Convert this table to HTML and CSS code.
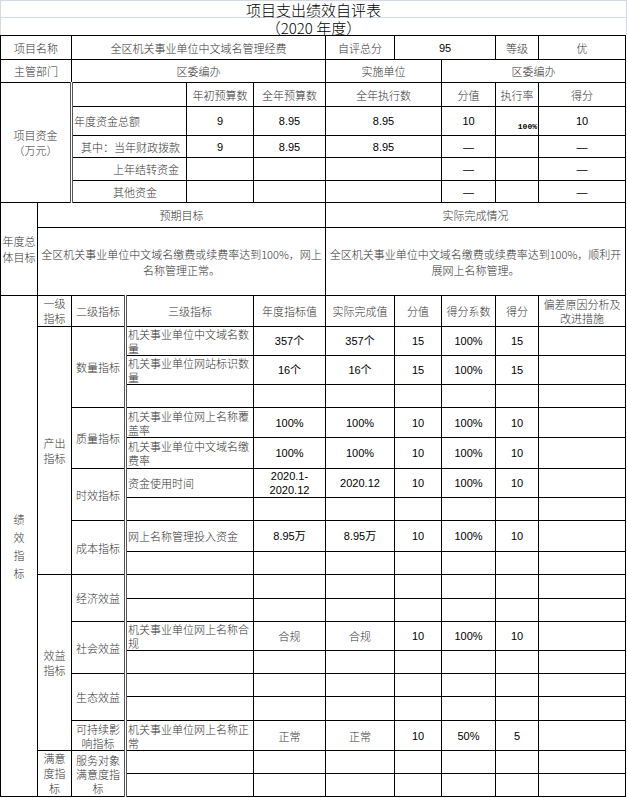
FILE: index.html
```html
<!DOCTYPE html>
<html lang="zh-CN">
<head>
<meta charset="utf-8">
<title>项目支出绩效自评表</title>
<link rel="stylesheet" href="styles.css">
</head>
<body>
<div class="sheet">
  <div class="title">项目支出绩效自评表</div>
  <div class="subtitle">（2020 年度）</div>
  <table class="grid">
    <colgroup>
      <col class="w37"><col class="w34"><col class="w54"><col class="w61"><col class="w67"><col class="w72"><col class="w69"><col class="w47"><col class="w54"><col class="w43"><col class="w87">
    </colgroup>
    <tr class="h24">
      <td colspan="2">项目名称</td>
      <td colspan="4">全区机关事业单位中文域名管理经费</td>
      <td>自评总分</td>
      <td colspan="2" class="num">95</td>
      <td>等级</td>
      <td>优</td>
    </tr>
    <tr class="h23">
      <td colspan="2">主管部门</td>
      <td colspan="4">区委编办</td>
      <td colspan="2">实施单位</td>
      <td colspan="3">区委编办</td>
    </tr>
    <tr class="h24">
      <td colspan="2" rowspan="5" class="fund dblr">项目资金<br>（万元）</td>
      <td colspan="2"></td>
      <td>年初预算数</td>
      <td>全年预算数</td>
      <td colspan="2">全年执行数</td>
      <td>分值</td>
      <td>执行率</td>
      <td>得分</td>
    </tr>
    <tr class="h25">
      <td colspan="2" class="left i1">年度资金总额</td>
      <td class="num">9</td>
      <td class="num">8.95</td>
      <td colspan="2" class="num">8.95</td>
      <td class="num">10</td>
      <td class="tiny">100%</td>
      <td class="num">10</td>
    </tr>
    <tr class="h22">
      <td colspan="2" class="left i8">其中：当年财政拨款</td>
      <td class="num">9</td>
      <td class="num">8.95</td>
      <td colspan="2" class="num">8.95</td>
      <td class="num">—</td>
      <td></td>
      <td class="num">—</td>
    </tr>
    <tr class="h23">
      <td colspan="2" class="left i40">上年结转资金</td>
      <td></td>
      <td></td>
      <td colspan="2"></td>
      <td class="num">—</td>
      <td></td>
      <td class="num">—</td>
    </tr>
    <tr class="h22">
      <td colspan="2" class="left i40">其他资金</td>
      <td></td>
      <td></td>
      <td colspan="2"></td>
      <td class="num">—</td>
      <td></td>
      <td class="num">—</td>
    </tr>
    <tr class="h25">
      <td rowspan="2" class="tight goalhead">年度总<br>体目标</td>
      <td colspan="5">预期目标</td>
      <td colspan="5">实际完成情况</td>
    </tr>
    <tr class="h68">
      <td colspan="5" class="goal">全区机关事业单位中文域名缴费或续费率达到100%，网上<br>名称管理正常。</td>
      <td colspan="5" class="goal">全区机关事业单位中文域名缴费或续费率达到100%，顺利开<br>展网上名称管理。</td>
    </tr>
    <tr class="h31">
      <td rowspan="19" class="vert"><span class="stack">绩<br>效<br>指<br>标</span></td>
      <td class="tight">一级<br>指标</td>
      <td class="dbl">二级指标</td>
      <td colspan="2">三级指标</td>
      <td>年度指标值</td>
      <td>实际完成值</td>
      <td>分值</td>
      <td>得分系数</td>
      <td>得分</td>
      <td class="multi">偏差原因分析及<br>改进措施</td>
    </tr>
    <tr class="h28">
      <td rowspan="9" class="tight">产出<br>指标</td>
      <td rowspan="3" class="dbl">数量指标</td>
      <td colspan="2" class="left multi">机关事业单位中文域名数<br>量</td>
      <td class="num">357个</td>
      <td class="num">357个</td>
      <td class="num">15</td>
      <td class="num">100%</td>
      <td class="num">15</td>
      <td></td>
    </tr>
    <tr class="h26">
      <td colspan="2" class="left multi">机关事业单位网站标识数<br>量</td>
      <td class="num">16个</td>
      <td class="num">16个</td>
      <td class="num">15</td>
      <td class="num">100%</td>
      <td class="num">15</td>
      <td></td>
    </tr>
    <tr class="h23">
      <td colspan="2"></td><td></td><td></td><td></td><td></td><td></td><td></td>
    </tr>
    <tr class="h30">
      <td rowspan="2" class="dbl">质量指标</td>
      <td colspan="2" class="left multi">机关事业单位网上名称覆<br>盖率</td>
      <td class="num">100%</td>
      <td class="num">100%</td>
      <td class="num">10</td>
      <td class="num">100%</td>
      <td class="num">10</td>
      <td></td>
    </tr>
    <tr class="h31">
      <td colspan="2" class="left multi">机关事业单位中文域名缴<br>费率</td>
      <td class="num">100%</td>
      <td class="num">100%</td>
      <td class="num">10</td>
      <td class="num">100%</td>
      <td class="num">10</td>
      <td></td>
    </tr>
    <tr class="h29">
      <td rowspan="2" class="dbl">时效指标</td>
      <td colspan="2" class="left">资金使用时间</td>
      <td class="num multi">2020.1-<br>2020.12</td>
      <td class="num">2020.12</td>
      <td class="num">10</td>
      <td class="num">100%</td>
      <td class="num">10</td>
      <td></td>
    </tr>
    <tr class="h23">
      <td colspan="2"></td><td></td><td></td><td></td><td></td><td></td><td></td>
    </tr>
    <tr class="h31">
      <td rowspan="2" class="dbl">成本指标</td>
      <td colspan="2" class="left">网上名称管理投入资金</td>
      <td class="num">8.95万</td>
      <td class="num">8.95万</td>
      <td class="num">10</td>
      <td class="num">100%</td>
      <td class="num">10</td>
      <td></td>
    </tr>
    <tr class="h23">
      <td colspan="2"></td><td></td><td></td><td></td><td></td><td></td><td></td>
    </tr>
    <tr class="h24">
      <td rowspan="7" class="tight">效益<br>指标</td>
      <td rowspan="2" class="dbl">经济效益</td>
      <td colspan="2"></td><td></td><td></td><td></td><td></td><td></td><td></td>
    </tr>
    <tr class="h23">
      <td colspan="2"></td><td></td><td></td><td></td><td></td><td></td><td></td>
    </tr>
    <tr class="h29">
      <td rowspan="2" class="dbl">社会效益</td>
      <td colspan="2" class="left multi">机关事业单位网上名称合<br>规</td>
      <td>合规</td>
      <td>合规</td>
      <td class="num">10</td>
      <td class="num">100%</td>
      <td class="num">10</td>
      <td></td>
    </tr>
    <tr class="h23">
      <td colspan="2"></td><td></td><td></td><td></td><td></td><td></td><td></td>
    </tr>
    <tr class="h23">
      <td rowspan="2" class="dbl">生态效益</td>
      <td colspan="2"></td><td></td><td></td><td></td><td></td><td></td><td></td>
    </tr>
    <tr class="h24">
      <td colspan="2"></td><td></td><td></td><td></td><td></td><td></td><td></td>
    </tr>
    <tr class="h30">
      <td class="dbl multi">可持续影<br>响指标</td>
      <td colspan="2" class="left multi">机关事业单位网上名称正<br>常</td>
      <td>正常</td>
      <td>正常</td>
      <td class="num">10</td>
      <td class="num">50%</td>
      <td class="num">5</td>
      <td></td>
    </tr>
    <tr class="h23">
      <td rowspan="2" class="tight multi">满意<br>度指<br>标</td>
      <td rowspan="2" class="dbl multi">服务对象<br>满意度指<br>标</td>
      <td colspan="2"></td><td></td><td></td><td></td><td></td><td></td><td></td>
    </tr>
    <tr class="h23">
      <td colspan="2"></td><td></td><td></td><td></td><td></td><td></td><td></td>
    </tr>
  </table>
</div>
</body>
</html>
```

FILE: styles.css
```css
html, body {
  margin: 0;
  padding: 0;
  background: #ffffff;
}

body {
  font-family: "Noto Sans CJK SC", "Liberation Sans", sans-serif;
  font-weight: 300;
  color: #1a1a1a;
}

.sheet {
  width: 627px;
}

.title,
.subtitle {
  box-sizing: border-box;
  width: 627px;
  text-align: center;
  font-size: 15px;
  color: #000;
  border-left: 1px solid #d4dae4;
  border-right: 1px solid #d4dae4;
}

.title {
  height: 18px;
  line-height: 17px;
  border-top: 1px solid #d4dae4;
  border-bottom: 1px solid #d4dae4;
}

.subtitle {
  height: 17px;
  line-height: 19px;
}

.grid {
  border-collapse: collapse;
  table-layout: fixed;
  width: 626px;
  font-size: 11px;
}

.w37 { width: 37px; }
.w34 { width: 34px; }
.w54 { width: 54px; }
.w61 { width: 61px; }
.w67 { width: 67px; }
.w72 { width: 72px; }
.w69 { width: 69px; }
.w47 { width: 47px; }
.w43 { width: 43px; }
.w87 { width: 87px; }

.grid td {
  border: 1px solid #000;
  padding: 0 1px;
  text-align: center;
  vertical-align: middle;
  line-height: 14px;
  overflow: hidden;
  white-space: nowrap;
  color: #333;
}

.h22 td { height: 21px; }
.h23 td { height: 22px; }
.h24 td { height: 23px; }
.h25 td { height: 24px; }
.h26 td { height: 25px; }
.h28 td { height: 27px; }
.h29 td { height: 28px; }
.h30 td { height: 29px; }
.h31 td { height: 30px; }
.h32 td { height: 31px; }
.h68 td { height: 67px; }

.grid td.num {
  font-family: "Liberation Sans", "Noto Sans CJK SC", sans-serif;
  font-weight: 400;
  color: #000;
}

.grid td.left {
  text-align: left;
}

.grid td.i1 { padding-left: 1px; }
.grid td.i8 { padding-left: 8px; }
.grid td.i40 { padding-left: 40px; }

.grid td.multi {
  line-height: 14px;
}

.grid td.tight {
  padding: 0;
  line-height: 15px;
}

.grid td.goalhead {
  line-height: 16px;
}

.grid td.fund {
  line-height: 15px;
}

.grid td.dblr {
  border-right: 3px double #555;
}

.grid td.goal {
  line-height: 16px;
}

.grid td.tiny {
  font-family: "Liberation Mono", monospace;
  font-size: 8px;
  font-weight: bold;
  text-align: right;
  vertical-align: bottom;
  padding: 0 1px 4px 0;
  line-height: 8px;
  color: #000;
}

.grid td.vert {
  padding: 0;
  vertical-align: middle;
}

.stack {
  display: block;
  line-height: 18px;
}

.grid td.dbl {
  border-right: 3px double #555;
}
```
